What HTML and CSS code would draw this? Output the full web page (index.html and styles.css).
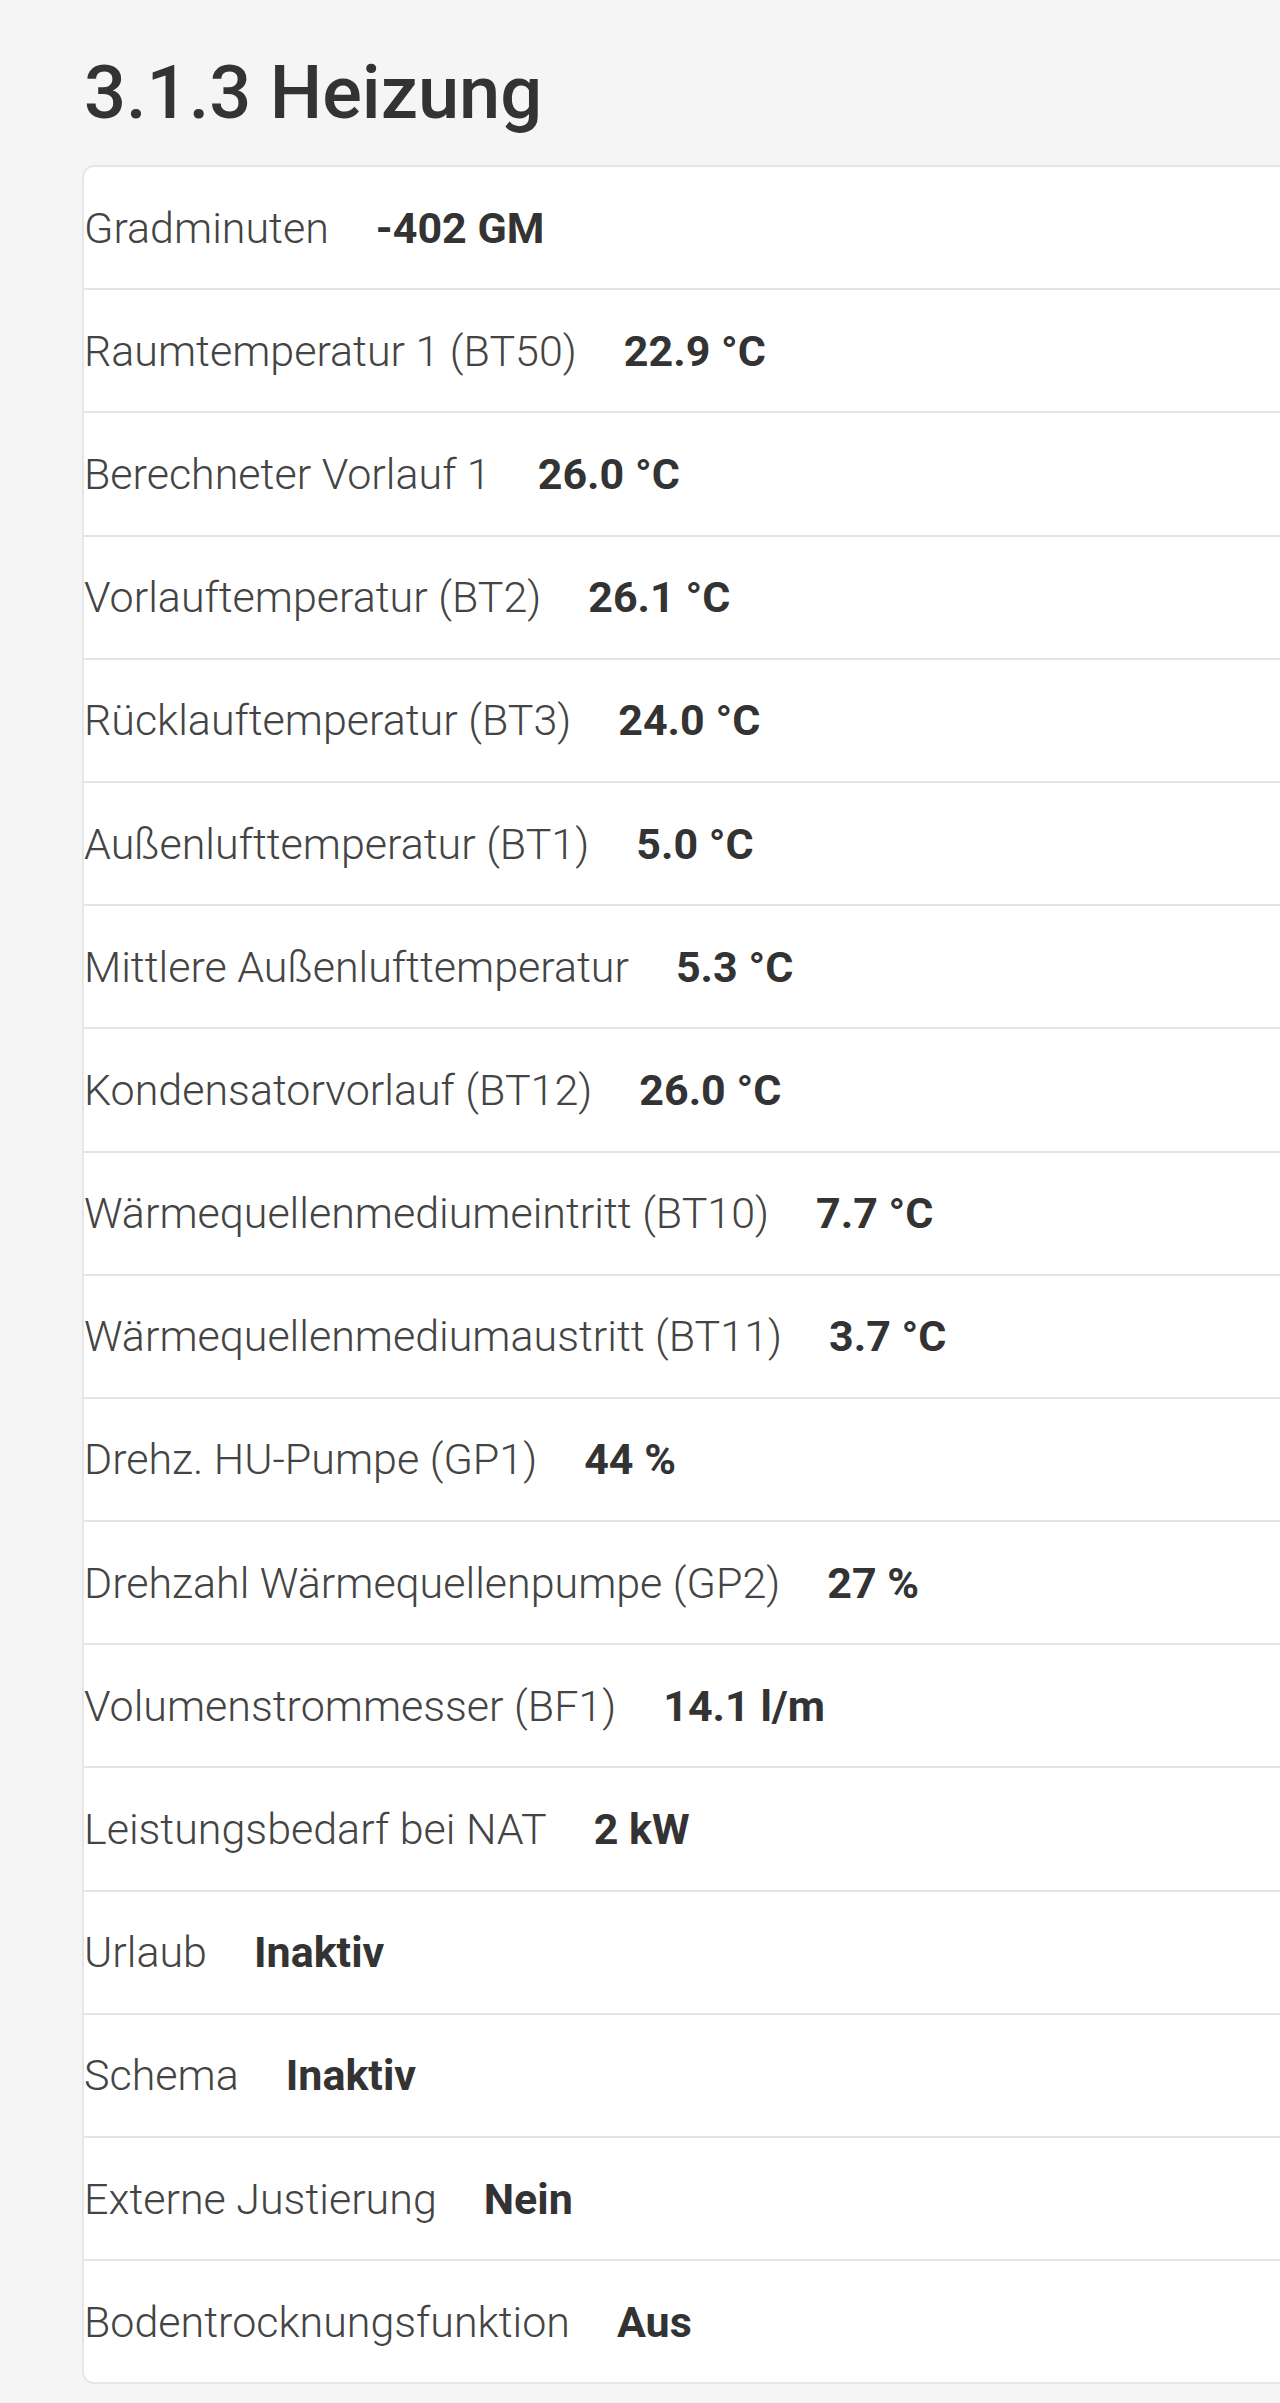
FILE: index.html
```html
<!DOCTYPE html>
<html lang="de">
<head>
    <meta charset="UTF-8" />
    <title>3.1.3 Heizung</title>
    <link rel="stylesheet" href="styles.css">
</head>
<body>
    <h1 class="page-title">3.1.3 Heizung</h1>

    <div class="card">
        <div class="row"><span class="label">Gradminuten</span><span class="value">-402 GM</span></div>
        <div class="row"><span class="label">Raumtemperatur 1 (BT50)</span><span class="value">22.9 °C</span></div>
        <div class="row"><span class="label">Berechneter Vorlauf 1</span><span class="value">26.0 °C</span></div>
        <div class="row"><span class="label">Vorlauftemperatur (BT2)</span><span class="value">26.1 °C</span></div>
        <div class="row"><span class="label">Rücklauftemperatur (BT3)</span><span class="value">24.0 °C</span></div>
        <div class="row"><span class="label">Außenlufttemperatur (BT1)</span><span class="value">5.0 °C</span></div>
        <div class="row"><span class="label">Mittlere Außenlufttemperatur</span><span class="value">5.3 °C</span></div>
        <div class="row"><span class="label">Kondensatorvorlauf (BT12)</span><span class="value">26.0 °C</span></div>
        <div class="row"><span class="label">Wärmequellenmediumeintritt (BT10)</span><span class="value">7.7 °C</span></div>
        <div class="row"><span class="label">Wärmequellenmediumaustritt (BT11)</span><span class="value">3.7 °C</span></div>
        <div class="row"><span class="label">Drehz. HU-Pumpe (GP1)</span><span class="value">44 %</span></div>
        <div class="row"><span class="label">Drehzahl Wärmequellenpumpe (GP2)</span><span class="value">27 %</span></div>
        <div class="row"><span class="label">Volumenstrommesser (BF1)</span><span class="value">14.1 l/m</span></div>
        <div class="row"><span class="label">Leistungsbedarf bei NAT</span><span class="value">2 kW</span></div>
        <div class="row"><span class="label">Urlaub</span><span class="value">Inaktiv</span></div>
        <div class="row"><span class="label">Schema</span><span class="value">Inaktiv</span></div>
        <div class="row"><span class="label">Externe Justierung</span><span class="value">Nein</span></div>
        <div class="row"><span class="label">Bodentrocknungsfunktion</span><span class="value">Aus</span></div>
    </div>
</body>
</html>
```

FILE: styles.css
```css
html, body {
    margin: 0;
    padding: 0;
}

body {
    font-family: Roboto, 'Noto Sans', sans-serif;
    background-color: #f5f5f5;
    color: #333;
    padding: 0 0 0 82px;
    overflow: hidden;
}

.page-title {
    margin: 0;
    padding: 50px 0 0 2px;
    height: 114px;
    font-size: 74px;
    font-weight: 500;
    line-height: 86px;
    color: #333;
    box-sizing: border-box;
}

.card {
    margin-top: 51px;
    width: 1300px;
    background-color: #fff;
    border: 2px solid #e6e6e6;
    border-right: none;
    border-radius: 12px 0 0 12px;
}

.row {
    display: flex;
    align-items: center;
    height: 121.2px;
    border-bottom: 2px solid #e4e4e4;
    font-size: 43px;
}

    .row:last-child {
        border-bottom: none;
    }

.label {
    font-weight: 300;
    color: #444;
}

.value {
    margin-left: 47px;
    font-weight: 700;
    color: #333;
}
```
